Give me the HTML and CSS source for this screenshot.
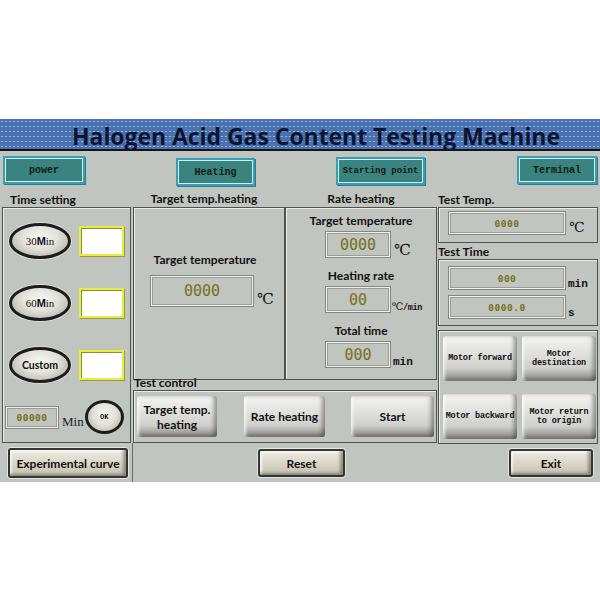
FILE: index.html
```html
<!DOCTYPE html>
<html>
<head>
<meta charset="utf-8">
<title>Halogen Acid Gas Content Testing Machine</title>
<link rel="stylesheet" href="styles.css">
</head>
<body>
<div class="screen">
  <header class="titlebar"><h1 class="title">Halogen Acid Gas Content Testing Machine</h1></header>
  <div class="hmi">
    <nav class="nav">
      <div class="nav-btn nb-power">power</div>
      <div class="nav-btn nb-heat">Heating</div>
      <div class="nav-btn nb-start">Starting point</div>
      <div class="nav-btn nb-term">Terminal</div>
    </nav>
    <div class="body">
      <section class="col col-left">
        <div class="label">Time setting</div>
        <div class="box time-box">
          <div class="time-row">
            <div class="oval">30<b>M</b>in</div>
            <div class="entry"></div>
          </div>
          <div class="time-row">
            <div class="oval">60<b>M</b>in</div>
            <div class="entry"></div>
          </div>
          <div class="time-row">
            <div class="oval oval-custom">Custom</div>
            <div class="entry"></div>
          </div>
          <div class="custom-row">
            <div class="lcd lcd-sm lcd-min">00000</div>
            <span class="unit-serif">Min</span>
            <div class="ok-btn">OK</div>
          </div>
        </div>
      </section>

      <section class="col col-mid">
        <div class="label-row">
          <div class="label label-c">Target temp.heating</div>
          <div class="label label-c">Rate heating</div>
        </div>
        <div class="mid-panels">
          <div class="box tt-box">
            <div class="field-label">Target temperature</div>
            <div class="field-row tt-row">
              <div class="lcd lcd-big">0000</div>
              <span class="unit-c">℃</span>
            </div>
          </div>
          <div class="box rh-box">
            <div class="field-label">Target temperature</div>
            <div class="field-row rh-row">
              <div class="lcd lcd-md">0000</div>
              <span class="unit-c">℃</span>
            </div>
            <div class="field-label">Heating rate</div>
            <div class="field-row rh-row">
              <div class="lcd lcd-md">00</div>
              <span class="unit-rate"><span class="deg">℃</span>/min</span>
            </div>
            <div class="field-label">Total time</div>
            <div class="field-row rh-row">
              <div class="lcd lcd-md">000</div>
              <span class="unit-mono">min</span>
            </div>
          </div>
        </div>
        <div class="label label-tc">Test control</div>
        <div class="box tc-box">
          <div class="btn3d tc-btn tc-1">Target temp.<br>heating</div>
          <div class="btn3d tc-btn tc-2">Rate heating</div>
          <div class="btn3d tc-btn tc-3">Start</div>
        </div>
      </section>

      <section class="col col-right">
        <div class="label label-r">Test Temp.</div>
        <div class="box tt2-box">
          <div class="field-row">
            <div class="lcd lcd-sm lcd-wide">0000</div>
            <span class="unit-c unit-c-sm">℃</span>
          </div>
        </div>
        <div class="label label-r">Test Time</div>
        <div class="box time2-box">
          <div class="field-row">
            <div class="lcd lcd-sm lcd-wide">000</div>
            <span class="unit-mono">min</span>
          </div>
          <div class="field-row">
            <div class="lcd lcd-sm lcd-wide">0000.0</div>
            <span class="unit-mono">s</span>
          </div>
        </div>
        <div class="box motor-box">
          <div class="btn3d motor-btn">Motor forward</div>
          <div class="btn3d motor-btn">Motor<br>destination</div>
          <div class="btn3d motor-btn">Motor backward</div>
          <div class="btn3d motor-btn">Motor return<br>to origin</div>
        </div>
      </section>
    </div>
    <footer class="footer">
      <div class="foot-left"><div class="btn-beige btn-curve">Experimental curve</div></div>
      <div class="foot-mid"><div class="btn-beige btn-reset">Reset</div></div>
      <div class="foot-right"><div class="btn-beige btn-exit">Exit</div></div>
    </footer>
  </div>
</div>
</body>
</html>
```

FILE: styles.css
```css
* { box-sizing: border-box; margin: 0; padding: 0; }

body {
  margin: 0;
  width: 600px;
  height: 600px;
  overflow: hidden;
  background: #ffffff;
  font-family: "Lato", "Open Sans", sans-serif;
  color: #111;
}

.screen {
  margin-top: 119px;
  width: 600px;
}

/* ---------- title bar ---------- */
.titlebar {
  height: 32px;
  background-color: #4a72b0;
  background-image: radial-gradient(circle, rgba(175, 200, 238, 0.75) 0.5px, transparent 0.9px);
  background-size: 4px 5px;
  border-bottom: 2px solid #141414;
  padding-left: 72px;
  display: flex;
  align-items: flex-end;
}

.title {
  font-family: "Open Sans", "Lato", sans-serif;
  font-size: 23px;
  font-weight: 700;
  color: #0c1530;
  line-height: 1;
  margin-bottom: 1px;
  letter-spacing: -0.05px;
  white-space: nowrap;
}

/* ---------- hmi area ---------- */
.hmi {
  background: #c1c5bf;
  height: 331px;
  display: flex;
  flex-direction: column;
}

.nav {
  height: 40px;
  display: flex;
  align-items: flex-start;
  padding-top: 5px;
}

.nav-btn {
  height: 28px;
  background: #3a837e;
  border: 2px solid #3a9db5;
  box-shadow: inset 0 0 0 1px #d2f1f7, 1px 1px 0 #2a7d90;
  display: flex;
  align-items: center;
  justify-content: center;
  font-family: "Liberation Mono", monospace;
  font-weight: 700;
  font-size: 10px;
  color: #101a18;
}

.nb-power { width: 82px; margin-left: 3px; }
.nb-heat { width: 79px; margin-left: 91px; margin-top: 2px; }
.nb-start { width: 89px; margin-left: 81px; margin-top: 1px; font-size: 9px; }
.nb-term { width: 80px; margin-left: 92px; }

.body {
  height: 252px;
  display: grid;
  grid-template-columns: 133px 305px 162px;
}

.label {
  height: 16px;
  font-weight: 700;
  font-size: 12px;
  line-height: 16px;
  color: #111;
  white-space: nowrap;
}

.box {
  border: 1px solid #4f524e;
  box-shadow: inset 1px 1px 0 #e9ebe7;
}

/* ---------- left column ---------- */
.col-left { padding-left: 2px; }
.col-left .label { padding-left: 8px; padding-top: 1px; }

.time-box {
  width: 129px;
  height: 236px;
  padding: 15px 0 0 6px;
  display: flex;
  flex-direction: column;
  gap: 26px;
}

.time-row {
  display: flex;
  align-items: center;
  gap: 8px;
  height: 36px;
}

.oval {
  width: 62px;
  height: 36px;
  border-radius: 50%;
  border: 3px solid #1d1d1b;
  background: radial-gradient(ellipse at 50% 38%, #f7f7f2 0%, #e2e2da 45%, #b9bab0 80%, #8f9087 100%);
  box-shadow: 0 0 0 1px #dcdcd6;
  display: flex;
  align-items: center;
  justify-content: center;
  font-family: "Liberation Serif", serif;
  font-size: 11px;
  color: #111;
}

.oval b { font-family: "Liberation Sans", sans-serif; font-weight: 900; }

.oval-custom {
  font-family: "Lato", sans-serif;
  font-weight: 700;
  font-size: 10.5px;
}

.entry {
  width: 45px;
  height: 30px;
  background: #ffffff;
  border: 2px solid #e8ec3c;
  box-shadow: inset 1px 1px 0 #8c8c3a, 1px 1px 0 #9a9a40;
}

.custom-row {
  display: flex;
  align-items: center;
  margin-top: -9px;
  margin-left: -4px;
}

.lcd {
  border: 1px solid #848782;
  box-shadow: inset 0 0 0 1px #eef0ec, inset 0 0 0 2px #9a9d98;
  display: flex;
  align-items: center;
  justify-content: center;
  font-family: "DejaVu Sans Mono", monospace;
  color: #75701a;
}

.lcd-min {
  width: 54px;
  height: 23px;
  font-size: 10px;
  font-weight: 700;
}

.unit-serif {
  font-family: "Liberation Serif", serif;
  font-size: 13px;
  margin: 10px 0 0 3px;
  color: #222;
}

.ok-btn {
  width: 39px;
  height: 34px;
  margin-left: 1px;
  border-radius: 50%;
  border: 3px solid #1d1d1b;
  background: radial-gradient(ellipse at 50% 38%, #f7f7f2 0%, #e0e0d8 50%, #a7a89e 100%);
  display: flex;
  align-items: center;
  justify-content: center;
  font-family: "Liberation Mono", monospace;
  font-weight: 700;
  font-size: 7px;
}

/* ---------- middle column ---------- */
.label-row { display: grid; grid-template-columns: 152px 152px; }
.label-c { text-align: center; }
.label-row .label-c:first-child { padding-right: 10px; }

.mid-panels {
  display: grid;
  grid-template-columns: 152px 152px;
  height: 167px;
}

.field-label {
  font-weight: 700;
  font-size: 12px;
  text-align: center;
  line-height: 14px;
  color: #111;
}

.field-row {
  display: flex;
  align-items: flex-end;
}

.tt-box { padding-top: 45px; }
.tt-box .field-label { padding-right: 8px; }
.tt-row { margin-top: 8px; padding-left: 16px; }

.lcd-big {
  width: 104px;
  height: 32px;
  font-size: 15px;
}

.unit-c {
  font-family: "DejaVu Serif", "Liberation Serif", serif;
  font-size: 15px;
  line-height: 15px;
  margin-left: 3px;
  color: #111;
}

.rh-box { padding-top: 6px; }
.rh-box .field-label { margin-bottom: 3px; }
.rh-row { padding-left: 39px; margin-bottom: 11px; }

.lcd-md {
  width: 66px;
  height: 27px;
  font-size: 15px;
}

.unit-rate {
  font-family: "Liberation Mono", monospace;
  font-weight: 700;
  font-size: 8.5px;
  margin-left: 1px;
  letter-spacing: -0.3px;
}

.unit-rate .deg {
  font-family: "DejaVu Serif", serif;
  font-weight: 400;
  font-size: 10px;
}

.unit-mono {
  font-family: "Liberation Mono", monospace;
  font-weight: 700;
  font-size: 11px;
  margin-left: 2px;
  line-height: 11px;
}

.label-tc { padding-left: 1px; padding-top: 1px; }

.tc-box {
  width: 304px;
  height: 53px;
  display: flex;
  align-items: flex-start;
  padding-top: 5px;
}

.btn3d {
  background: linear-gradient(to bottom, #f3f3f1 0%, #e0e0dd 40%, #cfcfcc 72%, #a3a3a0 88%, #6f6f6c 100%);
  box-shadow: inset -4px 0 4px -1px rgba(40, 40, 40, 0.45), inset 3px 0 3px -1px rgba(255, 255, 255, 0.7);
  border-radius: 3px;
  display: flex;
  align-items: center;
  justify-content: center;
  text-align: center;
  color: #111;
}

.tc-btn {
  height: 41px;
  font-weight: 700;
  font-size: 12px;
  line-height: 15px;
}

.tc-1 { width: 80px; margin-left: 3px; }
.tc-2 { width: 81px; margin-left: 27px; }
.tc-3 { width: 83px; margin-left: 26px; }

/* ---------- right column ---------- */
.label-r { padding-left: 0; padding-top: 1px; }

.tt2-box {
  width: 160px;
  height: 36px;
  padding: 3px 0 0 9px;
}

.lcd-sm { font-weight: 700; font-size: 9.5px; letter-spacing: 0.5px; }

.lcd-wide {
  width: 118px;
  height: 24px;
}

.unit-c-sm { font-size: 14px; margin-left: 3px; }

.time2-box {
  width: 160px;
  height: 67px;
  padding: 6px 0 0 9px;
  display: flex;
  flex-direction: column;
  gap: 5px;
}

.motor-box {
  width: 160px;
  height: 114px;
  margin-top: 4px;
  padding: 5px 0 0 4px;
  display: grid;
  grid-template-columns: 74px 74px;
  grid-auto-rows: 45px;
  column-gap: 5px;
  row-gap: 13px;
}

.motor-btn {
  font-family: "Liberation Mono", monospace;
  font-weight: 700;
  font-size: 8.5px;
  line-height: 9px;
  letter-spacing: -0.2px;
}

/* ---------- footer ---------- */
.footer {
  height: 39px;
  display: grid;
  grid-template-columns: 133px 305px 162px;
}

.foot-left {
  border-right: 1px solid #6a6d68;
  padding: 5px 0 0 8px;
}

.foot-mid { padding: 6px 0 0 125px; }
.foot-right { padding: 6px 0 0 71px; }

.btn-beige {
  height: 28px;
  border: 2px solid #34352e;
  border-radius: 3px;
  background: linear-gradient(to bottom, #ecebe0 0%, #d9d7c8 50%, #c3c1b0 100%);
  box-shadow: inset -3px -2px 3px rgba(60, 60, 50, 0.45), inset 2px 2px 2px rgba(255, 255, 255, 0.7), 0 0 0 1px #e5e6e2;
  display: flex;
  align-items: center;
  justify-content: center;
  font-weight: 700;
  font-size: 12px;
  color: #111;
}

.btn-curve { width: 120px; height: 30px; }
.btn-reset { width: 87px; }
.btn-exit { width: 84px; }
```
